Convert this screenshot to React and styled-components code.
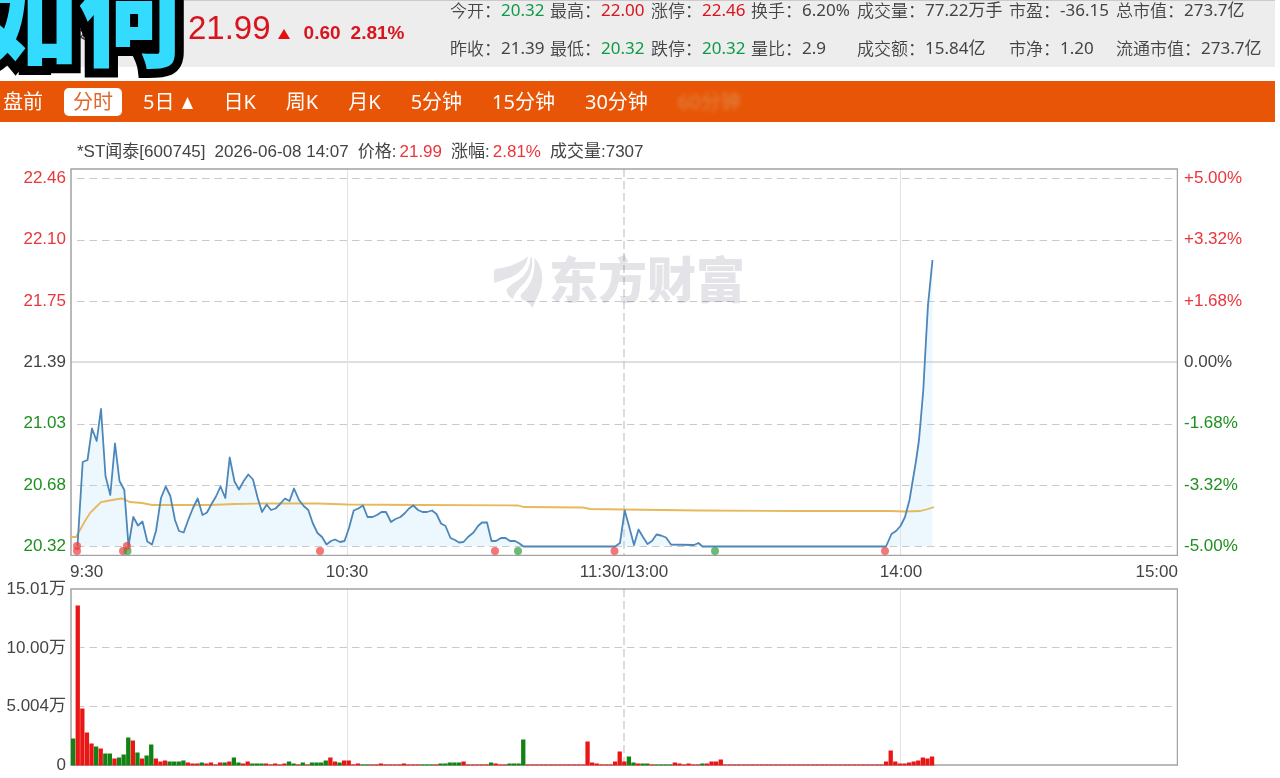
import React, { useState } from 'react';
import styled, { createGlobalStyle } from 'styled-components';

// =======================
// Data
// =======================

const STATS = [
  [
    { label: '今开', value: '20.32', tone: 'down' },
    { label: '最高', value: '22.00', tone: 'up' },
    { label: '涨停', value: '22.46', tone: 'up' },
    { label: '换手', value: '6.20%' },
    { label: '成交量', value: '77.22万手' },
    { label: '市盈', value: '-36.15' },
    { label: '总市值', value: '273.7亿' },
  ],
  [
    { label: '昨收', value: '21.39' },
    { label: '最低', value: '20.32', tone: 'down' },
    { label: '跌停', value: '20.32', tone: 'down' },
    { label: '量比', value: '2.9' },
    { label: '成交额', value: '15.84亿' },
    { label: '市净', value: '1.20' },
    { label: '流通市值', value: '273.7亿' },
  ],
];

const TABS = ['盘前', '分时', '5日', '日K', '周K', '月K', '5分钟', '15分钟', '30分钟', '60分钟'];

const PRICE_TICKS = [
  { price: '22.46', pct: '+5.00%', tone: 'up' },
  { price: '22.10', pct: '+3.32%', tone: 'up' },
  { price: '21.75', pct: '+1.68%', tone: 'up' },
  { price: '21.39', pct: '0.00%' },
  { price: '21.03', pct: '-1.68%', tone: 'down' },
  { price: '20.68', pct: '-3.32%', tone: 'down' },
  { price: '20.32', pct: '-5.00%', tone: 'down' },
];

const VOLUME_TICKS = ['15.01万', '10.00万', '5.004万', '0'];
const TIMES = ['9:30', '10:30', '11:30/13:00', '14:00', '15:00'];

const PRICE_LINE =
  '77.5,546 82.7,462 87.5,460 92,428.5 96.7,441 101,409 105.5,476 110.3,495 115,443.5 119.5,481 124.3,490 ' +
  '128.5,546 133.3,517 138,525.5 142.5,521.5 147.3,541.5 152,544.5 156,531 161,498 165.7,486.5 170.3,496 ' +
  '175,520 179,531 183.7,532.5 188,520.5 193,508 197.7,498.5 202.5,515 207,512.5 211.5,504 216,496.5 ' +
  '220.5,486.5 225.3,498 229.7,457.5 234.5,481.5 239,489.5 243.7,481 248.3,474.5 253,479.5 257.7,498 ' +
  '262,512 266.7,504.5 271,510 275.5,508.5 280,504 285,498.5 289.5,501 294,488.5 299,500 303.7,506 ' +
  '308.3,510 312.7,523 317.5,533 322,537 326.5,544.5 331,541 335,539.5 340,542 344.5,541 349,528 ' +
  '353.7,510.5 358.3,508.5 363,505.5 367.5,517 372.5,517 377,515 381.5,512 386,512 391,522 395.5,519 ' +
  '400.5,517 405,513 409,508.5 413.3,505.5 418,510 422.5,512 427,512 432,510.5 436.5,514 441,523.5 ' +
  '445.5,526 450.5,538 455,540 459,542.5 463.5,542 468,537 473.5,532.5 478,526 482,522.5 487,522.5 ' +
  '491.5,541 496,541 501,538 505.5,538 510,541 515,541 519.5,543.5 523.5,546.5 615,546.5 620,543 ' +
  '624.7,510.5 629,526 634,545 638.5,529.5 643,537 647.5,544 652,541 656.5,534.5 661,535.5 666,537.5 ' +
  '671,544.5 694,545 698.5,543 702.5,546.5 886,546.5 891.5,534 896,531 900.5,526 905,517 909.5,500 ' +
  '912,485 916,461 919,440 921,417 923.3,390 926,340 928,305 930,285 932.5,260';

const AVERAGE_LINE =
  '71,537 76,537 80,530 85,521 90,513 95,508 101,502 107,501 115,499.5 122,498.5 130,502 142,503 152,505 ' +
  '210,505 235,504 262,503.5 318,503.5 347,504.5 420,505 518,505.5 524,507 583,507.5 590,509 624,509.5 ' +
  '700,510.5 800,511 890,511 905,511.5 920,511 928,509 934,507';

const MARKERS = [
  [77, 546, 'up'], [77, 551, 'up'], [123, 551, 'up'], [127.5, 551, 'down'], [127, 546, 'up'],
  [320, 551, 'up'], [495, 551, 'up'], [518, 551, 'down'], [614.5, 551, 'up'], [715, 551, 'down'],
  [885, 551, 'up'],
];

// minute -> bar height, positive is a rising minute, negative a falling one
const VOLUMES = {
  0: -27, 1: 160, 2: 57, 3: 33, 4: 22, 5: -19, 6: 17, 7: -12, 8: -12, 9: 7, 10: -8, 11: -11, 12: -28,
  13: 25, 14: -13, 15: 7, 16: -10, 17: -21, 18: 7, 19: 4, 20: 5, 21: -4, 22: -4, 23: -4, 24: -5, 25: 3,
  26: 2, 27: 2, 28: -3, 29: 2, 30: 3, 31: 1, 32: 3, 33: -3, 34: 4, 35: -8, 36: -3, 37: 2, 38: 4, 39: -2,
  40: -2, 41: -2, 42: 2, 43: 1, 44: 2, 45: 1, 46: 2, 47: -4, 48: -2, 50: -3, 52: -3, 53: -3, 54: -3,
  55: -5, 56: 8, 57: 4, 58: -3, 59: 5, 60: 5, 62: 2, 63: -1, 64: -1, 67: 2, 72: 2, 76: -1, 77: -1,
  78: -1, 80: -2, 81: -2, 82: -3, 83: -3, 84: -3, 85: 4, 91: -3, 92: 2, 95: -2, 96: -2, 97: -2, 98: -26,
  112: 24, 113: 3, 114: 2, 118: 4, 119: 14, 120: 4, 121: -9, 122: -3, 123: 2, 124: -2, 125: -2,
  127: -1, 128: -1, 129: -1, 130: -1, 131: 3, 132: 2, 134: 2, 137: -2, 138: 2, 139: 4, 140: 4, 141: 6,
  177: 4, 178: 15, 179: 4, 180: 2, 181: 2, 182: 3, 183: 4, 184: 5, 185: 8, 186: 7, 187: 9,
};
const MINUTES = Array.from({ length: 188 }, (_, i) => i);

const tones = { up: '#e8363b', down: '#1f8f1f' };
const quoteTones = { up: '#d9141e', down: '#0f9a48' };

// =======================
// Layout & Basic Styling
// =======================

const GlobalStyle = createGlobalStyle`
  * { box-sizing: border-box; }
  body {
    margin: 0;
    background: #fff;
    color: #444;
    font-family: 'Liberation Sans', 'Noto Sans CJK SC', sans-serif;
    font-size: 17px;
    line-height: 20px;
  }
`;

const Page = styled.div`
  position: relative;
  padding-bottom: 12px;
`;

const QuoteBar = styled.header`
  display: flex;
  justify-content: space-between;
  margin-right: 5px;
  padding-bottom: 9px;
  background: #ededed;
  box-shadow: inset 0 1px #cfc9cc;
`;

const Quote = styled.div`
  display: flex;
  align-items: baseline;
  padding-top: 8px;
  color: ${quoteTones.up};
`;

const StockName = styled.h1`
  width: 188px;
  margin: 0;
  padding-left: 12px;
  color: #444;
  font-size: 21px;
  font-weight: 400;
`;

const Price = styled.span`
  font-size: 33px;
  line-height: 40px;
`;

const RiseArrow = styled.svg`
  width: 12px;
  height: 10px;
  margin: 0 14px 0 7px;
  fill: #e60f0f;
`;

const Change = styled.strong`
  margin-right: 10px;
  font-size: 19px;
`;

const Stats = styled.dl`
  display: grid;
  grid-template-columns: 100px 101px 100px 106px 152px 107px 159px;
  row-gap: 18px;
  margin: 0;
  font-family: 'Noto Sans', 'Noto Sans CJK SC', sans-serif;
`;

const Stat = styled.div`
  display: flex;
  white-space: nowrap;
`;

const StatLabel = styled.dt`
  font-family: 'Noto Sans CJK SC', sans-serif;
  font-weight: 350;
`;

const StatValue = styled.dd`
  margin: 0;
  color: ${({ $tone }) => quoteTones[$tone] || 'inherit'};
`;

const Caption = styled.div`
  position: absolute;
  top: -40px;
  left: -27px;
  color: #33dcff;
  font-family: 'Noto Sans CJK SC', sans-serif;
  font-size: 105px;
  font-weight: 900;
  line-height: 105px;
  white-space: nowrap;
  -webkit-text-stroke: 18px #000;
  paint-order: stroke fill;
`;

const Tabs = styled.nav`
  display: flex;
  align-items: center;
  gap: 12px;
  height: 41px;
  margin: 14px 5px 0 0;
  padding-left: 3px;
  background: #e95506;
`;

const Tab = styled.button`
  height: 28px;
  padding: 0 9px;
  border: none;
  border-radius: 5px;
  background: ${({ $active }) => ($active ? '#fff' : 'transparent')};
  color: ${({ $active }) => ($active ? '#e0662a' : '#fff')};
  font-family: 'Noto Sans', 'Noto Sans CJK SC', sans-serif;
  font-size: 20px;
  line-height: 28px;
  white-space: nowrap;
  cursor: pointer;

  &:first-child {
    padding-left: 0;
  }

  &:last-child {
    color: #dc8a4c;
    filter: blur(2px);
  }
`;

const MoreArrow = styled.svg`
  width: 11px;
  height: 12px;
  margin-left: 8px;
  fill: currentColor;
`;

const ChartTitle = styled.div`
  display: flex;
  gap: 9px;
  padding: 20px 0 6px 77px;
  white-space: nowrap;
`;

const Tone = styled.span`
  color: ${({ $tone }) => tones[$tone]};

  ${ChartTitle} & {
    margin-left: 3px;
  }
`;

const Charts = styled.main`
  display: grid;
  grid-template-columns: 66px 1fr 98px;
  column-gap: 4px;
`;

const Axis = styled.div`
  display: flex;
  flex-direction: column;
  justify-content: space-between;
  align-items: ${({ $side }) => ($side === 'right' ? 'flex-start' : 'flex-end')};
  padding-left: ${({ $side }) => ($side === 'right' ? '2px' : '0')};
  margin: ${({ $outset }) => ($outset ? '-9px 0' : '0')};
  white-space: nowrap;
`;

const Plot = styled.svg`
  display: block;
  width: 100%;
  height: auto;
`;

const PlotArea = styled.div`
  position: relative;
`;

const Watermark = styled.div`
  position: absolute;
  top: 22%;
  left: 38%;
  display: flex;
  align-items: center;
  gap: 6px;
  color: #e3e3e8;
  font-size: 49px;
  font-weight: 900;
  line-height: 56px;
  mix-blend-mode: multiply;

  svg {
    width: 52px;
    height: 56px;
    fill: currentColor;
  }
`;

const TimeAxis = styled.div`
  grid-column: 2;
  display: grid;
  grid-template-columns: repeat(8, 1fr);
  padding: 6px 0;
  text-align: center;
`;

const Time = styled.span`
  grid-column: span 2;

  &:first-child {
    grid-column: span 1;
    text-align: left;
  }

  &:last-child {
    grid-column: span 1;
    text-align: right;
  }
`;

// =======================
// Charts
// =======================

const GridLine = ({ y, solid }) => (
  <line
    x1={solid ? 71 : 77}
    x2="1177"
    y1={y}
    y2={y}
    stroke={solid ? '#bdbdbd' : '#c9c9c9'}
    strokeDasharray={solid ? undefined : '7.5 5'}
  />
);

const HourLines = ({ top, bottom }) => (
  <>
    <path d={`M347.5 ${top}V${bottom}M900.5 ${top}V${bottom}`} stroke="#e2e2e2" />
    <path d={`M624 ${top}V${bottom}`} stroke="#b9b9bd" strokeDasharray="8 4" />
  </>
);

const PriceChart = () => (
  <Plot viewBox="70 168 1108 388" fill="none" role="img" aria-label="分时">
    <polygon points={`77.5,546 ${PRICE_LINE} 932.5,546`} fill="#edf8fe" />
    {[178.5, 240.5, 301.5, 424.5, 485.5, 546.5].map((y) => (
      <GridLine key={y} y={y} />
    ))}
    <GridLine y={362} solid />
    <HourLines top={169} bottom={555} />
    <rect x="71" y="169" width="1106.5" height="386.5" stroke="#a3a3a3" strokeWidth="1.5" />
    <polyline points={AVERAGE_LINE} stroke="#e6b95c" strokeWidth="1.8" />
    <polyline points={PRICE_LINE} stroke="#4d87b9" strokeWidth="1.8" strokeLinejoin="round" />
    {MARKERS.map(([x, y, tone]) => (
      <circle key={`${x}-${y}`} cx={x} cy={y} r="4" fill={tone === 'up' ? '#f03c3c' : '#2f9b3c'} opacity="0.7" />
    ))}
  </Plot>
);

const VolumeChart = () => (
  <Plot viewBox="70 588 1108 178" fill="none" role="img" aria-label="成交量">
    <GridLine y={647.5} />
    <GridLine y={706.5} />
    <HourLines top={589} bottom={765} />
    <rect x="71" y="589" width="1106.5" height="176" stroke="#a3a3a3" strokeWidth="1.5" />
    {MINUTES.map((minute) => {
      const volume = VOLUMES[minute] || 1;
      const height = Math.abs(volume);
      return (
        <rect
          key={minute}
          x={71 + minute * 4.593}
          y={765.5 - height}
          width="4.3"
          height={height}
          fill={volume > 0 ? '#ea1515' : '#128212'}
        />
      );
    })}
  </Plot>
);

// =======================
// Main Component
// =======================
const App = () => {
  const [activeTab, setActiveTab] = useState('分时');

  return (
    <Page>
      <GlobalStyle />

      <QuoteBar>
        <Quote>
          <StockName>*ST闻泰</StockName>
          <Price>21.99</Price>
          <RiseArrow viewBox="0 0 12 10" aria-hidden="true">
            <path d="M6 0l6 10H0z" />
          </RiseArrow>
          <Change>0.60</Change>
          <Change>2.81%</Change>
        </Quote>
        <Stats>
          {STATS.flat().map(({ label, value, tone }) => (
            <Stat key={label}>
              <StatLabel>{label}：</StatLabel>
              <StatValue $tone={tone}>{value}</StatValue>
            </Stat>
          ))}
        </Stats>
      </QuoteBar>

      <Tabs>
        {TABS.map((tab) => (
          <Tab key={tab} $active={tab === activeTab} onClick={() => setActiveTab(tab)}>
            {tab}
            {tab === '5日' && (
              <MoreArrow viewBox="0 0 11 12" aria-hidden="true">
                <path d="M5.5 0L11 12H0z" />
              </MoreArrow>
            )}
          </Tab>
        ))}
      </Tabs>

      <ChartTitle>
        <span>*ST闻泰[600745]</span>
        <span>2026-06-08 14:07</span>
        <span>价格:<Tone $tone="up">21.99</Tone></span>
        <span>涨幅:<Tone $tone="up">2.81%</Tone></span>
        <span>成交量:7307</span>
      </ChartTitle>

      <Charts>
        <Axis>
          {PRICE_TICKS.map(({ price, tone }) => (
            <Tone key={price} $tone={tone}>{price}</Tone>
          ))}
        </Axis>
        <PlotArea>
          <PriceChart />
          <Watermark>
            <svg viewBox="0 0 156 168" aria-hidden="true">
              <path d="M8 68Q8 52 14 48Q70 42 112 10Q104 52 62 72Q40 80 10 90Z" />
              <path d="M118 14Q118 56 84 80Q58 94 46 110Q50 132 66 138Q70 118 100 90Q130 56 122 12Z" />
              <path d="M130 14Q146 30 152 58Q158 90 144 120L124 166Q116 148 98 142Q86 136 90 124Q136 84 130 14Z" />
            </svg>
            东方财富
          </Watermark>
        </PlotArea>
        <Axis $side="right">
          {PRICE_TICKS.map(({ pct, tone }) => (
            <Tone key={pct} $tone={tone}>{pct}</Tone>
          ))}
        </Axis>

        <TimeAxis>
          {TIMES.map((time) => (
            <Time key={time}>{time}</Time>
          ))}
        </TimeAxis>
      </Charts>

      <Charts as="section">
        <Axis $outset>
          {VOLUME_TICKS.map((tick) => (
            <span key={tick}>{tick}</span>
          ))}
        </Axis>
        <VolumeChart />
      </Charts>

      <Caption>如何</Caption>
    </Page>
  );
};

export default App;
